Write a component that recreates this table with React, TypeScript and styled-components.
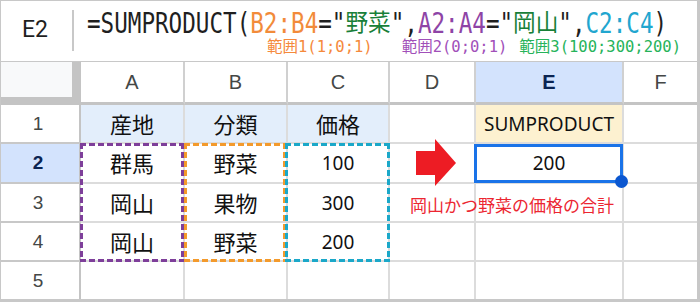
import styled, { createGlobalStyle } from "styled-components";

const GlobalStyle = createGlobalStyle`
  html, body {
    margin: 0;
    padding: 0;
    background: #ffffff;
  }
  body {
    width: 700px;
    height: 304px;
    overflow: hidden;
  }
`;

const ink = "#1f1f1f";
const orange = "#f28b3a";
const purple = "#8e44a6";
const cyan = "#22a6cf";
const green = "#188038";

const Frame = styled.div`
  box-sizing: border-box;
  width: 700px;
  height: 302px;
  border-top: 1px solid #c8c8c8;
  border-left: 1px solid #c8c8c8;
  border-right: 3px solid #c8c8c8;
  border-bottom: 3px solid #c8c8c8;
  display: flex;
  flex-direction: column;
`;

const FormulaBar = styled.div`
  height: 60px;
  border-bottom: 1px solid #c8c8c8;
  display: flex;
  align-items: stretch;
`;

const NameBox = styled.div`
  width: 71px;
  padding-left: 21px;
  box-sizing: border-box;
  display: flex;
  align-items: center;
  font-family: Roboto, "Liberation Sans", sans-serif;
  font-size: 23px;
  color: #1f1f1f;
  padding-bottom: 4px;
`;

const Divider = styled.div`
  width: 2px;
  margin: 9px 0 10px;
  background: #c8c8c8;
`;

const FormulaArea = styled.div`
  padding: 7px 0 0 13px;
  display: flex;
  flex-direction: column;
`;

const FormulaLine = styled.div`
  height: 30px;
  line-height: 30px;
  white-space: nowrap;
  font-family: "DejaVu Sans Mono", "Noto Sans CJK JP", monospace;
  font-size: 22.6px;
`;

const Tok = styled.span<{ $c: string; $cjk?: boolean }>`
  color: ${(p) => p.$c};
  display: inline-block;
  line-height: 22px;
  font-family: ${(p) =>
    p.$cjk ? `"Noto Sans CJK JP", sans-serif` : `"DejaVu Sans Mono", monospace`};
  transform: ${(p) => (p.$cjk ? "scaleY(1.05)" : "scaleY(1.25)")};
`;

const NoteLine = styled.div`
  height: 18px;
  line-height: 18px;
  display: flex;
  white-space: nowrap;
`;

const Note = styled.span<{ $c: string; $left: number }>`
  color: ${(p) => p.$c};
  margin-left: ${(p) => p.$left}px;
  font-family: "DejaVu Sans Mono", "Noto Sans CJK JP", monospace;
  font-size: 15.5px;
`;

const Sheet = styled.div`
  display: grid;
  grid-template-columns: 80px 104px 103px 102px 86px 148px 73px;
  grid-template-rows: 43px 39px 40px 39px 39px 37px;
`;

const Cell = styled.div<{ $c: number; $r: number; $bg?: string }>`
  grid-column: ${(p) => p.$c};
  grid-row: ${(p) => p.$r};
  box-sizing: border-box;
  display: flex;
  align-items: center;
  justify-content: center;
  background: ${(p) => p.$bg ?? "#ffffff"};
  border-right: ${(p) => (p.$c === 7 ? "none" : "2px solid #dcdcdc")};
  border-bottom: ${(p) => (p.$r === 6 ? "none" : "2px solid #dcdcdc")};
  font-family: "Noto Sans", "Noto Sans CJK JP", sans-serif;
  font-size: 19px;
  color: #111111;
`;

const CjkCell = styled(Cell)`
  font-family: "Noto Sans CJK JP", sans-serif;
  font-size: 22px;
  padding-bottom: 2px;
`;

const ColHead = styled(Cell)<{ $active?: boolean }>`
  border-right-color: #d0d0d0;
  border-bottom: 3px solid #c4c4c4;
  font-family: "Liberation Sans", Arial, sans-serif;
  font-size: 20px;
  font-weight: ${(p) => (p.$active ? 700 : 400)};
  color: ${(p) => (p.$active ? "#0b2452" : "#444746")};
`;

const Corner = styled.div`
  grid-column: 1;
  grid-row: 1;
  box-sizing: border-box;
  background: #f8f9fa;
  border-right: 9px solid #c4c4c4;
  border-bottom: 8px solid #c4c4c4;
`;

const RowHead = styled(Cell)<{ $active?: boolean }>`
  border-right: 2px solid #c4c4c4;
  border-bottom: ${(p) => (p.$r === 6 ? "none" : "2px solid #c8c8c8")};
  font-family: "Liberation Sans", Arial, sans-serif;
  font-size: 19px;
  font-weight: ${(p) => (p.$active ? 700 : 400)};
  color: ${(p) => (p.$active ? "#0b2452" : "#444746")};
  padding-right: 4px;
`;

const DashBox = styled.div<{
  $c: number;
  $color: string;
  $ml: number;
  $mr: number;
}>`
  grid-column: ${(p) => p.$c};
  grid-row: 3 / 6;
  z-index: 2;
  pointer-events: none;
  margin: -1px ${(p) => p.$mr}px 0 ${(p) => p.$ml}px;
  background:
    repeating-linear-gradient(90deg, ${(p) => p.$color} 0 6px, transparent 6px 9px) top left / 100% 3px no-repeat,
    repeating-linear-gradient(90deg, ${(p) => p.$color} 0 6px, transparent 6px 9px) bottom left / 100% 3px no-repeat,
    repeating-linear-gradient(180deg, ${(p) => p.$color} 0 6px, transparent 6px 9px) top left / 3px 100% no-repeat,
    repeating-linear-gradient(180deg, ${(p) => p.$color} 0 6px, transparent 6px 9px) top right / 3px 100% no-repeat;
`;

const Selection = styled.div`
  grid-column: 6;
  grid-row: 3;
  position: relative;
  z-index: 3;
  margin: 0 1px 1px -2px;
  border: 3px solid #1a73e8;
  pointer-events: none;
`;

const Handle = styled.span`
  position: absolute;
  right: -8px;
  bottom: -8px;
  width: 13px;
  height: 13px;
  border-radius: 50%;
  background: #0b57d0;
`;

const ArrowSlot = styled.div`
  grid-column: 5;
  grid-row: 3;
  z-index: 2;
  display: flex;
  align-items: center;
  justify-content: flex-start;
  padding-left: 26px;
  margin-top: -7px;
  margin-bottom: -5px;
`;

const Caption = styled.div`
  grid-column: 5 / 7;
  grid-row: 4;
  z-index: 2;
  display: flex;
  align-items: center;
  padding: 2px 0 0 20px;
  font-family: "Noto Sans CJK JP", sans-serif;
  font-size: 17px;
  color: #ec2631;
  white-space: nowrap;
`;

function RedArrow() {
  return (
    <svg width="41" height="48" viewBox="0 0 41 48">
      <polygon points="0,12 19,12 19,0 40,24 19,47 19,36 0,36" fill="#ed1c24" />
    </svg>
  );
}

const formula = [
  { t: "=SUMPRODUCT(", c: ink },
  { t: "B2:B4", c: orange },
  { t: '="', c: ink },
  { t: "野菜", c: green, cjk: true },
  { t: '",', c: ink },
  { t: "A2:A4", c: purple },
  { t: '="', c: ink },
  { t: "岡山", c: green, cjk: true },
  { t: '",', c: ink },
  { t: "C2:C4", c: cyan },
  { t: ")", c: ink },
];

const columns = ["A", "B", "C", "D", "E", "F"];

const rows = [
  ["群馬", "野菜", "100"],
  ["岡山", "果物", "300"],
  ["岡山", "野菜", "200"],
];

export default function App() {
  return (
    <>
      <GlobalStyle />
      <Frame>
        <FormulaBar>
          <NameBox>E2</NameBox>
          <Divider />
          <FormulaArea>
            <FormulaLine>
              {formula.map((f, i) => (
                <Tok key={i} $c={f.c} $cjk={f.cjk}>
                  {f.t}
                </Tok>
              ))}
            </FormulaLine>
            <NoteLine>
              <Note $c="#f5893b" $left={180}>範囲1(1;0;1)</Note>
              <Note $c="#a14fb9" $left={29}>範囲2(0;0;1)</Note>
              <Note $c="#26b35a" $left={12}>範囲3(100;300;200)</Note>
            </NoteLine>
          </FormulaArea>
        </FormulaBar>

        <Sheet>
          <Corner />
          {columns.map((l, i) => (
            <ColHead
              key={l}
              $c={i + 2}
              $r={1}
              $active={l === "E"}
              $bg={l === "E" ? "#d3e3fd" : undefined}
            >
              {l}
            </ColHead>
          ))}

          {[1, 2, 3, 4, 5].map((n) => (
            <RowHead
              key={n}
              $c={1}
              $r={n + 1}
              $active={n === 2}
              $bg={n === 2 ? "#d3e3fd" : undefined}
            >
              {n}
            </RowHead>
          ))}

          <CjkCell $c={2} $r={2} $bg="#e3eefb">産地</CjkCell>
          <CjkCell $c={3} $r={2} $bg="#e3eefb">分類</CjkCell>
          <CjkCell $c={4} $r={2} $bg="#e3eefb">価格</CjkCell>
          <Cell $c={5} $r={2} />
          <Cell $c={6} $r={2} $bg="#fdf1d0">SUMPRODUCT</Cell>
          <Cell $c={7} $r={2} />

          {rows.map((row, i) => [
            <CjkCell key={`a${i}`} $c={2} $r={i + 3}>{row[0]}</CjkCell>,
            <CjkCell key={`b${i}`} $c={3} $r={i + 3}>{row[1]}</CjkCell>,
            <Cell key={`c${i}`} $c={4} $r={i + 3}>{row[2]}</Cell>,
            <Cell key={`d${i}`} $c={5} $r={i + 3} />,
            <Cell key={`e${i}`} $c={6} $r={i + 3}>{i === 0 ? "200" : ""}</Cell>,
            <Cell key={`f${i}`} $c={7} $r={i + 3} />,
          ])}

          {[2, 3, 4, 5, 6, 7].map((c) => (
            <Cell key={`r5${c}`} $c={c} $r={6} />
          ))}

          <DashBox $c={2} $color="#7e3f9a" $ml={-1} $mr={1} />
          <DashBox $c={3} $color="#f39a2c" $ml={-1} $mr={2} />
          <DashBox $c={4} $color="#1ba8c9" $ml={-3} $mr={0} />

          <Selection>
            <Handle />
          </Selection>

          <ArrowSlot>
            <RedArrow />
          </ArrowSlot>

          <Caption>岡山かつ野菜の価格の合計</Caption>
        </Sheet>
      </Frame>
    </>
  );
}
